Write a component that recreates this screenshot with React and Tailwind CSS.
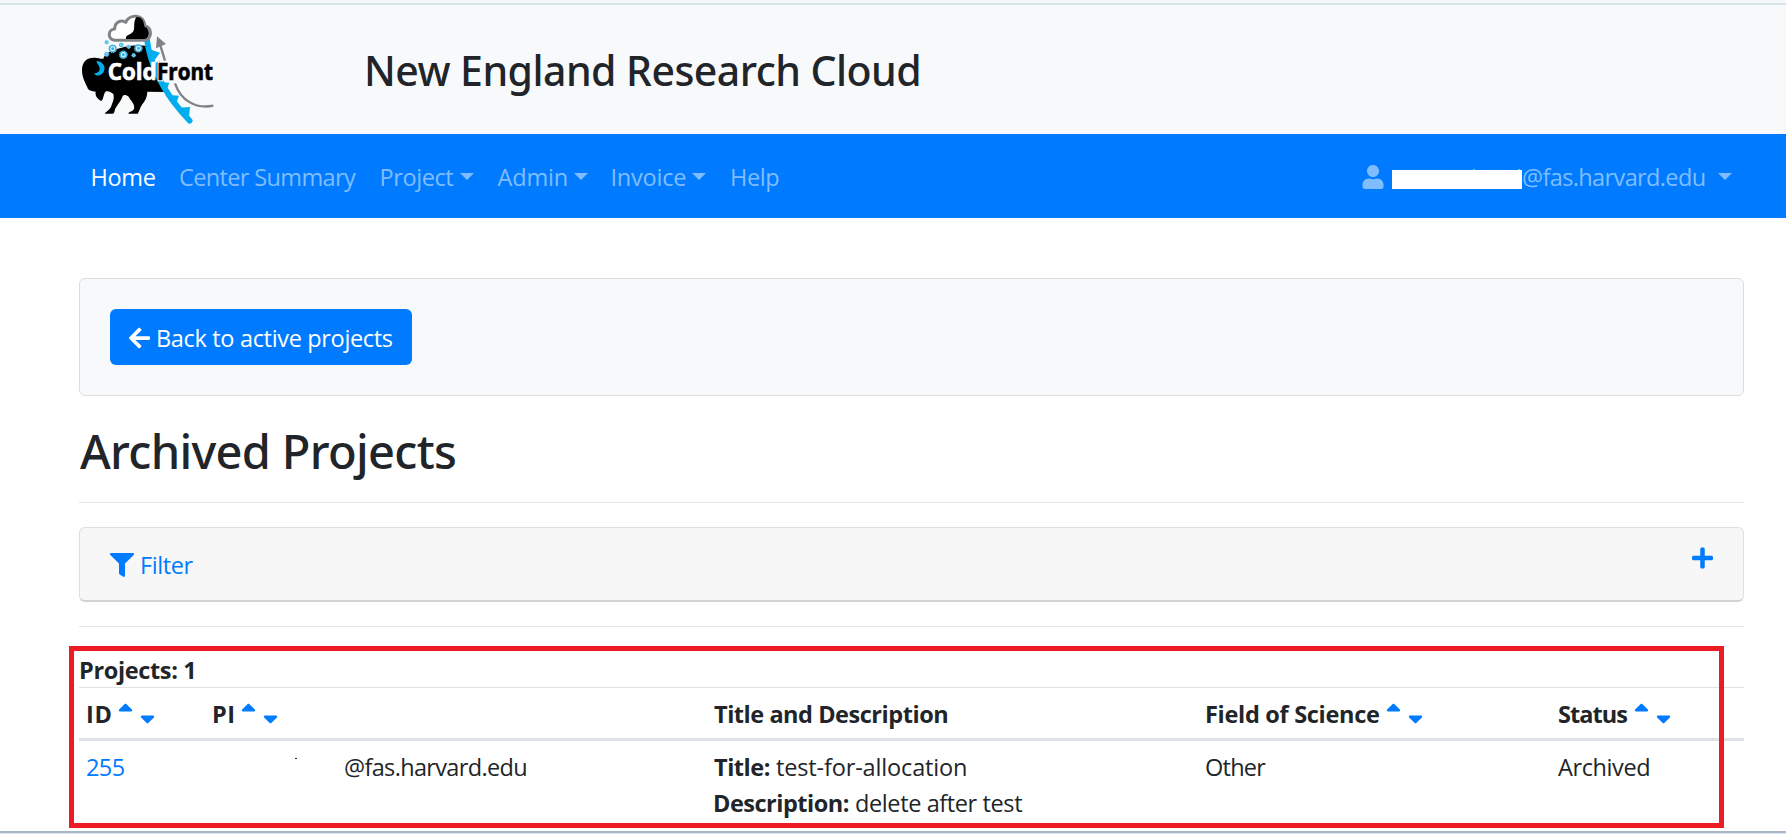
import React from "react";
import { FaArrowLeft, FaFilter, FaPlus, FaSortDown, FaSortUp, FaUser } from "react-icons/fa";

function Label({ className = "", children }) {
  return (
    <span className={`block h-9 shrink-0 whitespace-nowrap leading-[38px] ${className}`}>{children}</span>
  );
}

function Caret() {
  return (
    <svg viewBox="0 0 14 7" className="block h-[7px] w-[14px] shrink-0" fill="currentColor">
      <path d="M0 0H14L7 7Z" />
    </svg>
  );
}

function SortLinks() {
  return (
    <span className="flex gap-[7px] text-[#007bff]">
      <FaSortUp className="h-6 w-[15px]" />
      <FaSortDown className="mt-px h-6 w-[15px]" />
    </span>
  );
}

const flakes = [
  [140, 127, 6],
  [158, 146, 12],
  [184, 135, 7],
  [206, 140, 6],
  [235, 145, 12],
  [190, 164, 12],
  [140, 163, 7],
  [221, 166, 6],
];

function Logo() {
  return (
    <svg viewBox="0 15 540 384" className="block h-32 w-[180px] shrink-0">
      <path
        fill="#000"
        d="M66 210C66 186 80 172 104 173C116 173 124 178 130 176C134 160 158 150 182 144C210 134 240 134 262 138L278 190L318 276L262 275C262 290 256 302 246 314C240 322 238 334 233 341H205C206 334 220 334 222 326C226 312 212 302 206 290C198 284 192 284 188 288C184 304 166 320 164 332C163 338 161 341 158 341H135C136 334 150 332 154 318C158 306 164 296 160 282C154 276 144 272 138 274C130 280 132 296 124 303C116 298 104 290 107 275C96 274 84 272 82 262C76 248 66 232 66 210Z"
      />
      <path d="M261 118C268 180 300 270 389 362" fill="none" stroke="#00aeef" strokeWidth="17" strokeLinecap="round" />
      <path fill="#00aeef" d="M264 146L300 158L278 188ZM284 190L300 184L296 214ZM298 246L328 248L316 280ZM316 284L357 287L344 322ZM346 324L390 321L386 362Z" />
      <path fill="#fff" stroke="#808285" strokeWidth="9" strokeLinejoin="round" d="M164 121C142 119 143 88 164 87C164 66 184 58 197 67C208 42 250 40 255 78C278 82 276 118 255 121Z" />
      <path fill="#000" d="M229 51C246 50 252 64 253 80C270 84 272 112 255 117H198C196 106 206 106 214 100C230 90 216 72 229 51Z" />
      {flakes.map(([x, y, r]) => (
        <g key={`${x}-${y}`}>
          <circle cx={x} cy={y} r={r} fill="#29abe2" />
          <circle cx={x} cy={y} r={r * 0.5} fill="none" stroke="#d9f2fc" strokeWidth={r * 0.28} />
          <circle cx={x} cy={y} r={r} fill="none" stroke="#a5dff7" strokeWidth="2" strokeDasharray="3 4" />
        </g>
      ))}
      <path fill="#00aeef" d="M110 183C128 184 138 200 132 214C126 228 110 230 102 221C114 219 120 213 119 204C118 195 110 192 110 183Z" />
      <path fill="#808285" d="M291 109L318 132L288 145Z" />
      <path d="M301 136L315 182M345 250C362 300 405 328 460 317" fill="none" stroke="#808285" strokeWidth="7" />
      <g fontFamily="'Open Sans', sans-serif" fontWeight="700" fontSize="70">
        <text x="143" y="241" textLength="147" lengthAdjust="spacingAndGlyphs" fill="#fff" stroke="#fff" strokeWidth="2">Cold</text>
        <text x="291" y="241" textLength="168" lengthAdjust="spacingAndGlyphs" fill="none" stroke="#f8f9fb" strokeWidth="8">Front</text>
        <text x="291" y="241" textLength="168" lengthAdjust="spacingAndGlyphs" fill="#000" stroke="#000" strokeWidth="2">Front</text>
      </g>
    </svg>
  );
}

function NavItem({ className, labelClass, text, caret }) {
  return (
    <a className={`flex shrink-0 items-center ${className}`}>
      <Label className={labelClass}>{text}</Label>
      {caret && <Caret />}
    </a>
  );
}

export default function App() {
  return (
    <div className="relative flex h-[834px] w-[1786px] flex-col overflow-hidden bg-white font-['Open_Sans','Noto_Sans',sans-serif] text-[23.5px] text-[#212529]">
      <div className="h-[5px] shrink-0 border-b-2 border-[#d9e5e3] bg-[#f5f8fb]" />
      <header className="flex h-32 shrink-0 bg-[#f8f9fb] pl-[60px]">
        <Logo />
        <h1 className="ml-[124px] mt-10 whitespace-nowrap font-['Noto_Sans',sans-serif] text-[41px] font-medium leading-[50px] tracking-[-0.54px]">
          New England Research Cloud
        </h1>
      </header>

      <nav className="mt-px flex h-[84px] shrink-0 items-center bg-[#007bff] pl-[90.5px] text-[#80bdff]">
        <NavItem className="w-[88.5px] text-white" labelClass="tracking-[-0.35px]" text="Home" />
        <NavItem className="w-[200.5px]" labelClass="tracking-[-0.63px]" text="Center Summary" />
        <NavItem className="w-[118px]" labelClass="w-20 tracking-[-0.4px]" text="Project" caret />
        <NavItem className="w-[113px]" labelClass="w-[76px] tracking-[-0.15px]" text="Admin" caret />
        <NavItem className="w-[119.5px]" labelClass="w-[81.5px] tracking-[-0.22px]" text="Invoice" caret />
        <NavItem className="w-[60px]" labelClass="tracking-[-0.4px]" text="Help" />
        <a className="ml-auto mr-[54px] flex items-center">
          <FaUser className="mr-2 mt-0.5 h-6 w-[22px]" />
          <span className="relative mt-[7px] block h-[19px] w-[130px] bg-white">
            <span className="absolute -top-px left-[81px] h-px w-0.5 bg-[#80bdff]" />
            <span className="absolute -top-px right-0.5 h-px w-0.5 bg-[#80bdff]" />
          </span>
          <Label className="w-[196px] tracking-[-0.62px]">@fas.harvard.edu</Label>
          <Caret />
        </a>
      </nav>

      <main className="ml-[79px] mt-[60px] flex w-[1665px] flex-col">
        <section className="h-[118px] shrink-0 rounded-md border border-[#dcdddf] bg-[#f8f9fb] p-[30px]">
          <button className="flex h-14 w-[302px] items-center rounded-md bg-[#007bff] pl-[19px] text-white">
            <FaArrowLeft className="mr-1.5 mt-px h-6 w-[21px]" />
            <Label className="tracking-[-0.33px]">Back to active projects</Label>
          </button>
        </section>

        <h2 className="mt-[26px] h-20 shrink-0 border-b border-transparent pl-px font-['Noto_Sans',sans-serif] text-[47px] font-medium leading-[58px] tracking-[-0.7px]">
          Archived Projects
        </h2>
        <hr className="border-[#e5e5e5]" />

        <section className="mt-6 flex h-[75px] shrink-0 justify-between rounded-md border border-b-2 border-[#dfdfdf] border-b-[#d3d3d3] bg-[#f7f7f7] pl-[30px] pr-[30px] text-[#007bff]">
          <a className="flex h-9 pt-[18px]">
            <FaFilter className="mr-1.5 mt-[7px] size-6 shrink-0" />
            <Label className="tracking-[-0.4px]">Filter</Label>
          </a>
          <FaPlus className="mt-[18px] h-6 w-[21px]" />
        </section>
        <hr className="mt-6 border-[#e5e5e5]" />

        <div className="mt-6 h-9 shrink-0 font-bold">
          <Label className="tracking-[-0.35px]">Projects: 1</Label>
        </div>
        <div className="grid h-[54px] shrink-0 grid-cols-[126px_502px_491px_353px_1fr] border-b-[3px] border-t border-[#dee2e6] pl-[7px] pt-[7px] font-bold">
          <div className="flex h-9 items-center">
            <Label className="w-8 tracking-[0.6px]">ID</Label>
            <SortLinks />
          </div>
          <div className="flex h-9 items-center">
            <Label className="w-[29px] tracking-[0.5px]">PI</Label>
            <SortLinks />
          </div>
          <Label className="tracking-[-0.46px]">Title and Description</Label>
          <div className="flex h-9 items-center">
            <Label className="w-[181px] tracking-[-0.3px]">Field of Science</Label>
            <SortLinks />
          </div>
          <div className="flex h-9 items-center">
            <Label className="w-[76px] tracking-[-0.95px]">Status</Label>
            <SortLinks />
          </div>
        </div>
        <div className="grid shrink-0 grid-cols-[126px_502px_491px_353px_1fr] pl-[7px] pt-[7px]">
          <Label className="tracking-[-0.6px] text-[#007bff]">255</Label>
          <div className="flex">
            <span className="ml-[83px] mt-2.5 h-px w-0.5 bg-[#212529]" />
            <Label className="ml-[47px] tracking-[-0.65px]">@fas.harvard.edu</Label>
          </div>
          <div>
            <div className="flex">
              <Label className="w-[62px] font-bold tracking-[-0.48px]">Title:</Label>
              <Label className="tracking-[-0.15px]">test-for-allocation</Label>
            </div>
            <div className="flex">
              <Label className="-ml-px w-[142px] font-bold tracking-[-0.5px]">Description:</Label>
              <Label className="tracking-[-0.39px]">delete after test</Label>
            </div>
          </div>
          <Label className="tracking-[-0.75px]">Other</Label>
          <Label className="tracking-[-0.4px]">Archived</Label>
        </div>
      </main>

      <div className="absolute left-[69px] top-[646px] h-[182px] w-[1655px] border-[5px] border-[#ed1c24]" />
      <div className="mt-auto h-[3px] shrink-0 border-t-2 border-[#a9b5c5] bg-[#dbe8f2]" />
    </div>
  );
}
